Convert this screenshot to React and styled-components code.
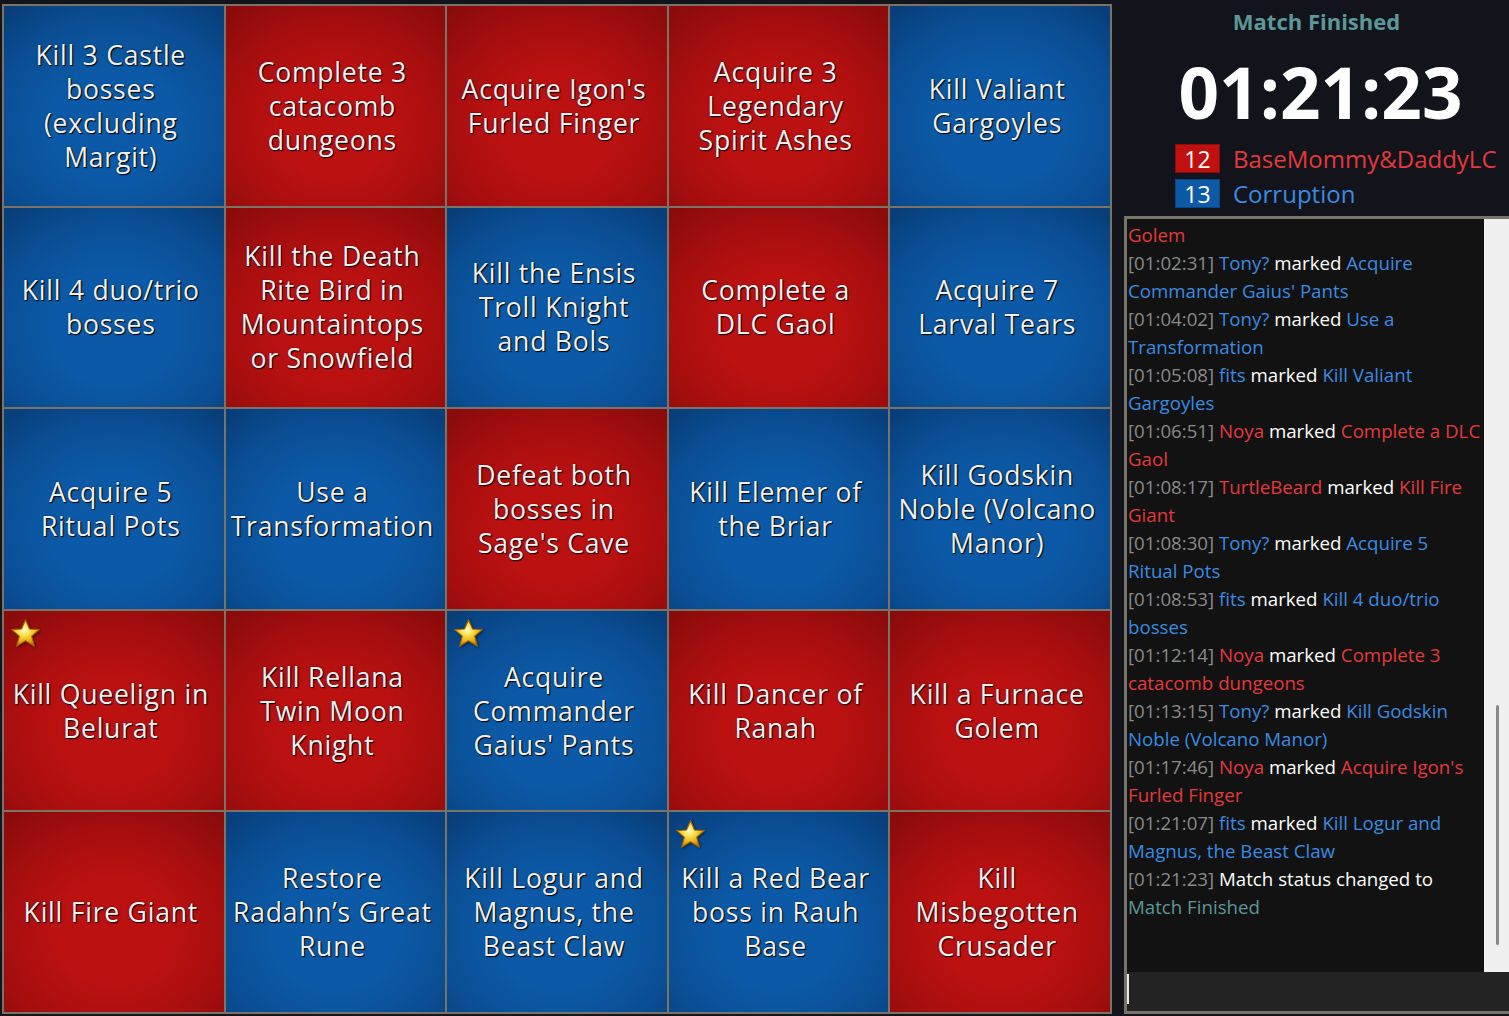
import React from "react";
import styled, { createGlobalStyle, css } from "styled-components";

const Global = createGlobalStyle`
  html, body { margin: 0; padding: 0; background: #13131c; }
  body { width: 1509px; height: 1016px; overflow: hidden; font-family: "Open Sans", "Noto Sans", sans-serif; }
  #root { width: 1509px; height: 1016px; }
`;

const Page = styled.div`
  display: flex;
  width: 1509px;
  height: 1016px;
  background: #13131c;
`;

const Board = styled.div`
  display: grid;
  grid-template-columns: repeat(5, 1fr);
  grid-template-rows: repeat(5, 1fr);
  gap: 2px;
  padding: 2px;
  margin: 4px 0 0 2px;
  width: 1110px;
  height: 1010px;
  box-sizing: border-box;
  background: #7a7468;
  flex-shrink: 0;
`;

const Cell = styled.div`
  position: relative;
  display: flex;
  align-items: center;
  justify-content: center;
  text-align: center;
  padding: 0 9px 0 3px;
  font-family: "Open Sans", "Noto Sans", sans-serif;
  font-size: 26.6px;
  letter-spacing: 0.75px;
  line-height: 34px;
  color: #f0f0f0;
  text-shadow: 1px 1px 1px #000, 0 0 2px rgba(0,0,0,0.5);
  ${({ $team }) =>
    $team === "red"
      ? css`background: radial-gradient(ellipse 75% 75% at 50% 60%, #bb1111 35%, #a50e0e 70%, #8a0b0b 100%);`
      : css`background: radial-gradient(ellipse 75% 75% at 50% 60%, #0c5aa7 35%, #0a4f95 70%, #083e7a 100%);`}
`;

const StarBadge = styled.svg`
  position: absolute;
  left: 6px;
  top: 7px;
  width: 31px;
  height: 31px;
  filter: drop-shadow(1px 1px 1px rgba(0,0,0,0.5));
`;

const Side = styled.div`
  flex: 1;
  display: flex;
  flex-direction: column;
  padding-left: 12px;
  min-width: 0;
`;

const Status = styled.div`
  margin-top: 6px;
  text-align: center;
  font-weight: 700;
  font-size: 22px;
  line-height: 30px;
  color: #5b9898;
`;

const Timer = styled.div`
  margin-top: 16px;
  text-align: center;
  font-weight: 700;
  font-size: 71px;
  line-height: 80px;
  color: #ffffff;
  padding-left: 8px;
`;

const Scores = styled.div`
  margin-top: 12px;
  padding-left: 51px;
  display: flex;
  flex-direction: column;
  gap: 6px;
`;

const ScoreRow = styled.div`
  display: flex;
  align-items: center;
  gap: 13px;
  height: 29px;
`;

const ScoreBox = styled.div`
  width: 45px;
  height: 29px;
  box-sizing: border-box;
  display: flex;
  align-items: center;
  justify-content: center;
  font-size: 23px;
  color: #fff;
  background: ${({ $team }) => ($team === "red" ? "#c01111" : "#0c5aa7")};
  border: 1px solid ${({ $team }) => ($team === "red" ? "#8a0c0c" : "#0a4480")};
`;

const TeamName = styled.div`
  font-size: 24px;
  line-height: 29px;
  white-space: nowrap;
  color: ${({ $team }) => ($team === "red" ? "#e23a3a" : "#3a8be0")};
`;

const Chat = styled.div`
  margin-top: 8px;
  height: 798px;
  box-sizing: border-box;
  border: 3px solid #7a7468;
  border-right: none;
  display: flex;
  flex-direction: column;
  background: #111;
`;

const LogArea = styled.div`
  flex: 1;
  display: flex;
  min-height: 0;
`;

const Log = styled.div`
  width: 356px;
  padding-top: 2px;
  padding-left: 1px;
  overflow: hidden;
  background: #121212;
  font-size: 18.7px;
  line-height: 28px;
`;

const Line = styled.div`
  white-space: nowrap;
`;

const Track = styled.div`
  position: relative;
  flex: 1;
  background: #f0f0f0;
`;

const Thumb = styled.div`
  position: absolute;
  left: 12px;
  top: 486px;
  width: 3px;
  height: 240px;
  border-radius: 2px;
  background: #888;
`;

const Input = styled.div`
  position: relative;
  height: 39px;
  background: #232323;
`;

const Caret = styled.div`
  position: absolute;
  left: 0;
  top: 2px;
  width: 2px;
  height: 30px;
  background: #eaeaea;
`;

const T = styled.span`
  color: ${({ $c }) =>
    ({ red: "#e23a3a", blue: "#3a8be0", grey: "#8a8a8a", white: "#ffffff", teal: "#5b9898" }[$c])};
`;

const cells = [
  ["blue", ["Kill 3 Castle", "bosses", "(excluding", "Margit)"]],
  ["red", ["Complete 3", "catacomb", "dungeons"]],
  ["red", ["Acquire Igon's", "Furled Finger"]],
  ["red", ["Acquire 3", "Legendary", "Spirit Ashes"]],
  ["blue", ["Kill Valiant", "Gargoyles"]],
  ["blue", ["Kill 4 duo/trio", "bosses"]],
  ["red", ["Kill the Death", "Rite Bird in", "Mountaintops", "or Snowfield"]],
  ["blue", ["Kill the Ensis", "Troll Knight", "and Bols"]],
  ["red", ["Complete a", "DLC Gaol"]],
  ["blue", ["Acquire 7", "Larval Tears"]],
  ["blue", ["Acquire 5", "Ritual Pots"]],
  ["blue", ["Use a", "Transformation"]],
  ["red", ["Defeat both", "bosses in", "Sage's Cave"]],
  ["blue", ["Kill Elemer of", "the Briar"]],
  ["blue", ["Kill Godskin", "Noble (Volcano", "Manor)"]],
  ["red", ["Kill Queelign in", "Belurat"], true],
  ["red", ["Kill Rellana", "Twin Moon", "Knight"]],
  ["blue", ["Acquire", "Commander", "Gaius' Pants"], true],
  ["red", ["Kill Dancer of", "Ranah"]],
  ["red", ["Kill a Furnace", "Golem"]],
  ["red", ["Kill Fire Giant"]],
  ["blue", ["Restore", "Radahn’s Great", "Rune"]],
  ["blue", ["Kill Logur and", "Magnus, the", "Beast Claw"]],
  ["blue", ["Kill a Red Bear", "boss in Rauh", "Base"], true],
  ["red", ["Kill", "Misbegotten", "Crusader"]],
];

const log = [
  [["red", "Golem"]],
  [["grey", "[01:02:31] "], ["blue", "Tony?"], ["white", " marked "], ["blue", "Acquire"]],
  [["blue", "Commander Gaius' Pants"]],
  [["grey", "[01:04:02] "], ["blue", "Tony?"], ["white", " marked "], ["blue", "Use a"]],
  [["blue", "Transformation"]],
  [["grey", "[01:05:08] "], ["blue", "fits"], ["white", " marked "], ["blue", "Kill Valiant"]],
  [["blue", "Gargoyles"]],
  [["grey", "[01:06:51] "], ["red", "Noya"], ["white", " marked "], ["red", "Complete a DLC"]],
  [["red", "Gaol"]],
  [["grey", "[01:08:17] "], ["red", "TurtleBeard"], ["white", " marked "], ["red", "Kill Fire"]],
  [["red", "Giant"]],
  [["grey", "[01:08:30] "], ["blue", "Tony?"], ["white", " marked "], ["blue", "Acquire 5"]],
  [["blue", "Ritual Pots"]],
  [["grey", "[01:08:53] "], ["blue", "fits"], ["white", " marked "], ["blue", "Kill 4 duo/trio"]],
  [["blue", "bosses"]],
  [["grey", "[01:12:14] "], ["red", "Noya"], ["white", " marked "], ["red", "Complete 3"]],
  [["red", "catacomb dungeons"]],
  [["grey", "[01:13:15] "], ["blue", "Tony?"], ["white", " marked "], ["blue", "Kill Godskin"]],
  [["blue", "Noble (Volcano Manor)"]],
  [["grey", "[01:17:46] "], ["red", "Noya"], ["white", " marked "], ["red", "Acquire Igon's"]],
  [["red", "Furled Finger"]],
  [["grey", "[01:21:07] "], ["blue", "fits"], ["white", " marked "], ["blue", "Kill Logur and"]],
  [["blue", "Magnus, the Beast Claw"]],
  [["grey", "[01:21:23] "], ["white", "Match status changed to"]],
  [["teal", "Match Finished"]],
];

function Star({ id }) {
  return (
    <StarBadge viewBox="0 0 28 28">
      <defs>
        <radialGradient id={id} cx="45%" cy="38%" r="62%">
          <stop offset="0%" stopColor="#fffbd0" />
          <stop offset="35%" stopColor="#fae04a" />
          <stop offset="75%" stopColor="#e8a810" />
          <stop offset="100%" stopColor="#c07800" />
        </radialGradient>
      </defs>
      <polygon
        points="14,1.5 17.6,10 26.5,10.5 19.6,16.4 22,25.5 14,20.5 6,25.5 8.4,16.4 1.5,10.5 10.4,10"
        fill={`url(#${id})`}
        stroke="#a06400"
        strokeWidth="1"
        strokeLinejoin="round"
      />
    </StarBadge>
  );
}

export default function App() {
  return (
    <>
      <Global />
      <Page>
        <Board>
          {cells.map(([team, lines, star], i) => (
            <Cell key={i} $team={team}>
              {star && <Star id={`star${i}`} />}
              <div>
                {lines.map((l, j) => (
                  <React.Fragment key={j}>
                    {j > 0 && <br />}
                    {l}
                  </React.Fragment>
                ))}
              </div>
            </Cell>
          ))}
        </Board>
        <Side>
          <Status>Match Finished</Status>
          <Timer>01:21:23</Timer>
          <Scores>
            <ScoreRow>
              <ScoreBox $team="red">12</ScoreBox>
              <TeamName $team="red">BaseMommy&amp;DaddyLC</TeamName>
            </ScoreRow>
            <ScoreRow>
              <ScoreBox $team="blue">13</ScoreBox>
              <TeamName $team="blue">Corruption</TeamName>
            </ScoreRow>
          </Scores>
          <Chat>
            <LogArea>
              <Log>
                {log.map((parts, i) => (
                  <Line key={i}>
                    {parts.map(([c, t], j) => (
                      <T key={j} $c={c}>{t}</T>
                    ))}
                  </Line>
                ))}
              </Log>
              <Track>
                <Thumb />
              </Track>
            </LogArea>
            <Input>
              <Caret />
            </Input>
          </Chat>
        </Side>
      </Page>
    </>
  );
}
